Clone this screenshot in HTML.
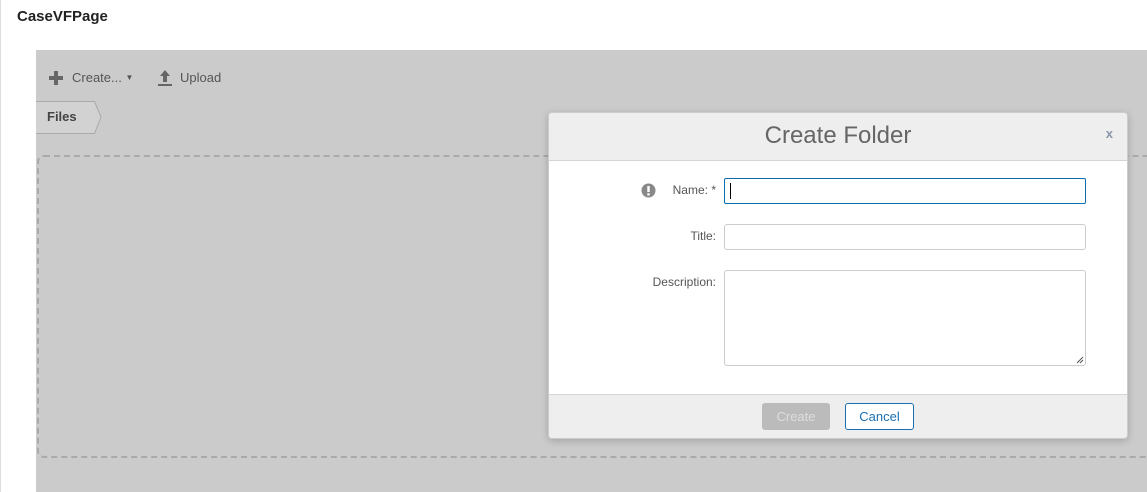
<!DOCTYPE html>
<html><head><meta charset="utf-8"><style>
*{box-sizing:border-box}
body{margin:0;width:1147px;height:492px;background:#fff;font-family:"Liberation Sans",sans-serif;position:relative;overflow:hidden;color:#333}
.abs{position:absolute}
.lbl{position:absolute;font-size:12px;color:#555;text-align:right;right:431px}
.inp{position:absolute;left:724px;width:362px;background:#fff;border:1px solid #ccc;border-radius:3px}
</style></head><body>
<div class="abs" style="left:0;top:0;width:1px;height:492px;background:#ddd"></div>
<div class="abs" style="left:17px;top:8px;font-size:15px;font-weight:bold;color:#222">CaseVFPage</div>
<div class="abs" style="left:36px;top:50px;width:1111px;height:442px;background:#cbcbcb"></div>
<svg class="abs" style="left:49px;top:71px" width="14" height="14"><path d="M5 0h4v5h5v4H9v5H5V9H0V5h5z" fill="#666"/></svg>
<div class="abs" style="left:72px;top:70px;font-size:13px;color:#555">Create... <span style="font-size:8px;vertical-align:2px">▼</span></div>
<svg class="abs" style="left:157px;top:69px" width="16" height="18"><path d="M8 1L3 7h3v6h4V7h3z" fill="#666"/><rect x="1" y="15" width="14" height="2" fill="#666"/></svg>
<div class="abs" style="left:180px;top:70px;font-size:13px;color:#555">Upload</div>
<svg class="abs" style="left:36px;top:101px" width="66" height="33"><path d="M0.5 0.5H90L100 16 90 32.5H0.5" transform="scale(0.65 1)" fill="#d2d2d2" stroke="#aaa" vector-effect="non-scaling-stroke"/></svg>
<div class="abs" style="left:47px;top:109px;font-size:13px;font-weight:bold;color:#444">Files</div>
<div class="abs" style="left:37px;top:155px;width:1120px;height:303px;border:2px dashed #aaa;border-radius:7px"></div>
<div class="abs" style="left:548px;top:112px;width:580px;height:327px;background:#fff;border:1px solid #ccc;border-radius:4px;box-shadow:0 2px 8px rgba(0,0,0,.2);overflow:hidden">
 <div style="height:48px;background:#eee;border-bottom:1px solid #d5d5d5;text-align:center;font-size:24px;color:#666;line-height:46px">Create Folder</div>
 <div class="abs" style="right:14px;top:13px;font-size:13px;font-weight:bold;color:#8a97a8">x</div>
 <div class="abs" style="left:0;bottom:0;width:100%;height:44px;background:#eee;border-top:1px solid #d5d5d5"></div>
</div>
<svg class="abs" style="left:641px;top:183px" width="15" height="15"><circle cx="7.5" cy="7.5" r="7" fill="#888"/><rect x="6.3" y="3" width="2.4" height="6" fill="#fff"/><rect x="6.3" y="10.3" width="2.4" height="2.2" fill="#fff"/></svg>
<div class="lbl" style="top:183px">Name: *</div>
<div class="inp" style="top:178px;height:26px;border-color:#0a6db0;border-radius:2px"><div style="position:absolute;left:5px;top:4px;width:1px;height:16px;background:#000"></div></div>
<div class="lbl" style="top:229px">Title:</div>
<div class="inp" style="top:224px;height:26px"></div>
<div class="lbl" style="top:275px">Description:</div>
<div class="inp" style="top:270px;height:96px"><svg style="position:absolute;right:1px;bottom:1px" width="8" height="8"><path d="M1 7L7 1M4 7L7 4" stroke="#555"/></svg></div>
<div class="abs" style="left:762px;top:403px;width:68px;height:27px;background:#bbb;border-radius:3px;color:#ddd;font-size:13px;text-align:center;line-height:27px">Create</div>
<div class="abs" style="left:845px;top:403px;width:69px;height:27px;background:#fff;border:1px solid #1a6fb0;border-radius:3px;color:#1a70b5;font-size:13px;text-align:center;line-height:25px">Cancel</div>
</body></html>
